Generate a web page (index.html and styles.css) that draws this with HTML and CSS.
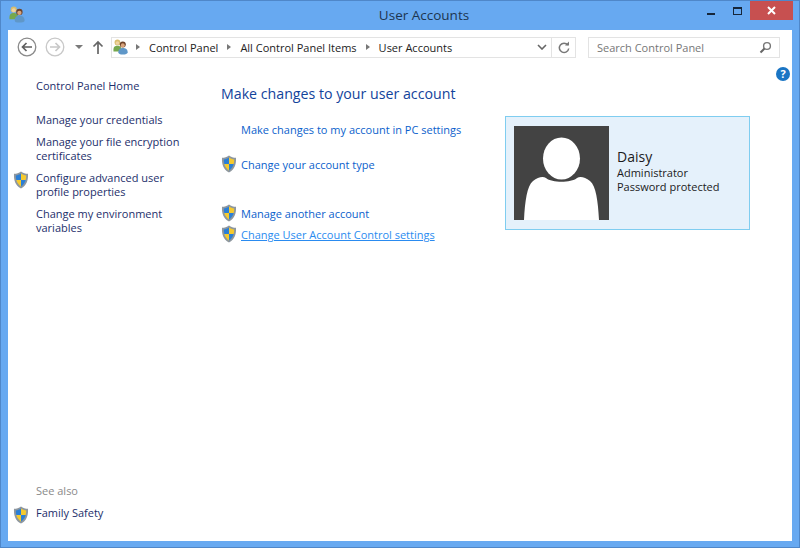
FILE: index.html
```html
<!DOCTYPE html>
<html lang="en">
    <head>
        <meta charset="UTF-8" />
        <title>User Accounts</title>
        <link rel="stylesheet" href="styles.css">
    </head>
    <body>
        <svg class="defs" width="0" height="0">
            <symbol id="shield" viewBox="0 0 16 18">
                <path d="M8 .5C6 2 3.500 2.800 1 2.800 .7 9 2 14.500 8 17.500 14 14.500 15.300 9 15 2.800 12.500 2.800 10 2 8 .5Z" fill="#8e979f"/>
                <path d="M8 2.500C6.400 3.600 4.600 4.200 2.800 4.400 2.800 6.200 3 7.800 3.400 9H8Z" fill="#2b7fd6"/>
                <path d="M8 2.500C9.600 3.600 11.400 4.200 13.200 4.400 13.200 6.200 13 7.800 12.600 9H8Z" fill="#f6ca2e"/>
                <path d="M3.400 9C4 11.600 5.500 13.900 8 15.400V9Z" fill="#f6ca2e"/>
                <path d="M12.600 9C12 11.600 10.500 13.900 8 15.400V9Z" fill="#2b7fd6"/>
            </symbol>
            <symbol id="users" viewBox="0 0 18 18">
                <circle cx="5" cy="3.800" r="3.200" fill="#d9bd6c"/>
                <circle cx="5" cy="4.500" r="2.100" fill="#efd3a0"/>
                <path d="M.5 12C.5 8.500 2.500 7.500 5 7.500S9.500 8.500 9.500 12V14H.5Z" fill="#76a84e"/>
                <circle cx="11" cy="6.300" r="3.400" fill="#6e432a"/>
                <circle cx="11" cy="7.200" r="2.300" fill="#d9a47c"/>
                <path d="M6 15C6 11.500 8 10.200 11 10.200S16.500 11.500 16.500 15C16.500 17 14 17.500 11 17.500S6 17 6 15Z" fill="#5f97c8"/>
            </symbol>
        </svg>

        <div class="window">
            <div class="titlebar">
                <svg class="title-icon"><use href="#users"/></svg>
                <div class="title">User Accounts</div>
                <div class="controls">
                    <div class="ctl"><div class="min-glyph"></div></div>
                    <div class="ctl"><div class="max-glyph"></div></div>
                    <div class="close">
                        <svg width="9" height="9" viewBox="0 0 9 9"><path d="M1 1L8 8M8 1L1 8" stroke="#fff" stroke-width="2"/></svg>
                    </div>
                </div>
            </div>

            <div class="client">
                <div class="toolbar">
                    <svg class="nav-btn" viewBox="0 0 20 20">
                        <circle cx="10" cy="10" r="8.800" fill="none" stroke="#8a8a8a" stroke-width="1.300"/>
                        <path d="M15 10H6M9.500 6L5.500 10L9.500 14" fill="none" stroke="#5f5f5f" stroke-width="1.700"/>
                    </svg>
                    <svg class="nav-btn next" viewBox="0 0 20 20">
                        <circle cx="10" cy="10" r="8.800" fill="none" stroke="#c8c8c8" stroke-width="1.300"/>
                        <path d="M5 10H14M10.500 6L14.500 10L10.500 14" fill="none" stroke="#c8c8c8" stroke-width="1.700"/>
                    </svg>
                    <svg class="drop" width="8" height="4" viewBox="0 0 8 4"><path d="M0 0H8L4 4Z" fill="#7a7a7a"/></svg>
                    <svg class="up" width="12" height="14" viewBox="0 0 12 14"><path d="M6 14V2M1.500 6.500L6 2L10.500 6.500" fill="none" stroke="#666" stroke-width="1.700"/></svg>

                    <div class="address">
                        <svg class="addr-icon"><use href="#users"/></svg>
                        <span class="crumb-arrow"></span><span class="crumb">Control Panel</span>
                        <span class="crumb-arrow"></span><span class="crumb">All Control Panel Items</span>
                        <span class="crumb-arrow"></span><span class="crumb">User Accounts</span>
                        <svg class="chev" width="10" height="6" viewBox="0 0 10 6"><path d="M1 1L5 5L9 1" fill="none" stroke="#666" stroke-width="1.600"/></svg>
                        <div class="refresh">
                            <svg width="12" height="13" viewBox="0 0 12 13"><path d="M9.800 4A4.700 4.700 0 1 0 10.700 7.500" fill="none" stroke="#777" stroke-width="1.500"/><path d="M7 4.500H11V.5Z" fill="#777"/></svg>
                        </div>
                    </div>

                    <div class="search">
                        <span class="search-text">Search Control Panel</span>
                        <svg width="13" height="13" viewBox="0 0 13 13"><circle cx="8" cy="5" r="3.400" fill="none" stroke="#777" stroke-width="1.400"/><path d="M5.500 7.500L1.500 11.500" stroke="#666" stroke-width="2"/></svg>
                    </div>
                </div>

                <div class="help">?</div>

                <div class="panes">
                    <div class="sidebar">
                        <a class="side-link home">Control Panel Home</a>
                        <a class="side-link creds">Manage your credentials</a>
                        <a class="side-link">Manage your file encryption certificates</a>
                        <a class="side-link"><svg class="shield side-shield"><use href="#shield"/></svg>Configure advanced user profile properties</a>
                        <a class="side-link">Change my environment variables</a>
                        <div class="see-also">See also</div>
                        <a class="side-link family"><svg class="shield side-shield"><use href="#shield"/></svg>Family Safety</a>
                    </div>

                    <div class="main">
                        <h1 class="heading">Make changes to your user account</h1>
                        <div class="task first"><a>Make changes to my account in PC settings</a></div>
                        <div class="task second"><svg class="shield"><use href="#shield"/></svg><a>Change your account type</a></div>
                        <div class="task third"><svg class="shield"><use href="#shield"/></svg><a>Manage another account</a></div>
                        <div class="task fourth"><svg class="shield"><use href="#shield"/></svg><a class="hover">Change User Account Control settings</a></div>
                    </div>

                    <div class="card">
                        <svg class="photo" viewBox="0 0 95 94">
                            <rect width="95" height="94" fill="#434343"/>
                            <ellipse cx="47.500" cy="32.500" rx="18.500" ry="21" fill="#fff"/>
                            <path d="M10 94C11 75 13 60 19 55C24 51 29 50 32 52C38 57 57 57 63 52C66 50 71 51 76 55C82 60 84 75 85 94Z" fill="#fff"/>
                        </svg>
                        <div class="who">
                            <div class="name">Daisy</div>
                            <div>Administrator</div>
                            <div>Password protected</div>
                        </div>
                    </div>
                </div>
            </div>
        </div>
    </body>
</html>
```

FILE: styles.css
```css
html,
body {
    margin: 0;
    height: 100%;
    overflow: hidden;
}
body {
    font-family: 'Open Sans', 'Noto Sans', sans-serif;
    font-size: 11px;
}
.defs {
    position: absolute;
}

/* Window frame */
.window {
    box-sizing: border-box;
    width: 800px;
    height: 548px;
    display: flex;
    flex-direction: column;
    background: #67a9f1;
    border: 1px solid #4f87c9;
    padding: 0 7px 6px 7px;
}
.titlebar {
    height: 29px;
    flex: none;
    position: relative;
    display: flex;
    justify-content: center;
    padding-left: 48px;
}
.title-icon {
    position: absolute;
    left: 1px;
    top: 5px;
    width: 17px;
    height: 17px;
}
.title {
    font-size: 13.5px;
    line-height: 29px;
    color: #1d3550;
}
.controls {
    position: absolute;
    right: -1px;
    top: 0;
    display: flex;
}
.ctl {
    width: 26px;
    height: 20px;
    display: flex;
    align-items: center;
    justify-content: center;
}
.min-glyph {
    width: 8px;
    height: 2px;
    background: #16263a;
    margin-top: 6px;
}
.max-glyph {
    box-sizing: border-box;
    width: 9px;
    height: 8px;
    border: 1px solid #16263a;
    border-top-width: 2px;
}
.close {
    width: 43px;
    height: 19px;
    background: #c75050;
    display: flex;
    align-items: center;
    justify-content: center;
}

/* Client area */
.client {
    flex: 1;
    background: #fff;
    display: flex;
    flex-direction: column;
    position: relative;
    min-height: 0;
}
.toolbar {
    height: 34px;
    flex: none;
    display: flex;
    align-items: center;
    padding: 0 12px 0 9px;
    color: #222;
}
.nav-btn {
    width: 20px;
    height: 20px;
}
.nav-btn.next {
    margin-left: 8px;
}
.drop {
    margin-left: 10px;
}
.up {
    margin-left: 9px;
}
.address {
    box-sizing: border-box;
    width: 465px;
    height: 21px;
    margin-left: 7px;
    border: 1px solid #e3e3e3;
    display: flex;
    align-items: center;
    padding-left: 1px;
}
.addr-icon {
    width: 16px;
    height: 16px;
}
.crumb-arrow {
    width: 0;
    height: 0;
    border-left: 4px solid #777;
    border-top: 3.5px solid transparent;
    border-bottom: 3.5px solid transparent;
    margin: 0 9px 0 9px;
}
.addr-icon + .crumb-arrow {
    margin-left: 7px;
}
.chev {
    margin-left: auto;
    margin-right: 4px;
}
.refresh {
    width: 23px;
    height: 19px;
    border-left: 1px solid #e3e3e3;
    display: flex;
    align-items: center;
    justify-content: center;
}
.search {
    box-sizing: border-box;
    width: 192px;
    height: 21px;
    margin-left: auto;
    border: 1px solid #e3e3e3;
    display: flex;
    align-items: center;
    justify-content: space-between;
    padding: 0 7px 0 8px;
    color: #777;
}
.help {
    position: absolute;
    right: 2px;
    top: 37px;
    width: 14px;
    height: 14px;
    border-radius: 50%;
    background: #1a75c4;
    color: #fff;
    font-weight: 700;
    font-size: 11px;
    line-height: 14px;
    text-align: center;
}

/* Panes */
.panes {
    flex: 1;
    display: flex;
    position: relative;
    min-height: 0;
}
a {
    display: block;
}
.shield {
    width: 16px;
    height: 18px;
    flex: none;
}
.sidebar {
    width: 213px;
    flex: none;
    box-sizing: border-box;
    padding: 15px 40px 21px 28px;
    display: flex;
    flex-direction: column;
    color: #1d2f6b;
    line-height: 14px;
}
.side-link {
    position: relative;
    margin-bottom: 8px;
}
.home {
    margin-bottom: 20px;
}
.side-shield {
    position: absolute;
    left: -23px;
    top: 0;
}
.see-also {
    margin-top: auto;
    color: #8a8a8a;
    margin-bottom: 8px;
}
.family {
    margin-bottom: 0;
}
.main {
    width: 284px;
    flex: none;
    color: #0b5fcc;
}
.heading {
    font-size: 14.2px;
    font-weight: 400;
    color: #12439b;
    line-height: 20px;
    margin: 20px 0 0 0;
}
.task {
    display: flex;
    align-items: center;
    gap: 4px;
    height: 18px;
}
.task.first {
    margin-top: 16px;
    padding-left: 20px;
}
.task.second {
    margin-top: 17px;
}
.task.third {
    margin-top: 31px;
}
.task.fourth {
    margin-top: 3px;
}
.hover {
    color: #2a8bf0;
    text-decoration: underline;
}
.card {
    box-sizing: border-box;
    width: 245px;
    height: 114px;
    margin-top: 52px;
    background: #e5f1fb;
    border: 1px solid #7fcdf0;
    display: flex;
    align-items: flex-start;
    padding: 9px 8px;
    color: #1b1b1b;
    line-height: 14px;
}
.photo {
    width: 95px;
    height: 94px;
    flex: none;
}
.who {
    margin: 22px 0 0 8px;
}
.name {
    font-size: 14px;
    line-height: 18px;
}
```
